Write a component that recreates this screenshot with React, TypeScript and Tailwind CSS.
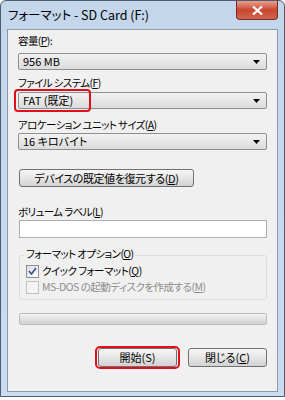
import React from "react";

const jp = { fontFamily: '"Noto Sans CJK JP", "Noto Sans", sans-serif' };

function Select({ value, highlight }: { value: string; highlight?: boolean }) {
  return (
    <div className="relative">
      <div className="flex h-[17px] items-center justify-between rounded-[2px] border border-[#8e8f8f] bg-gradient-to-b from-[#f2f2f2] to-[#dcdcdc] pl-[4px] pr-[6px] text-[11px] leading-[15px] text-black">
        <span>{value}</span>
        <svg width="7" height="4" viewBox="0 0 7 4"><path d="M0 0h7L3.5 4z" fill="#000" /></svg>
      </div>
      {highlight && (
        <div className="absolute left-[-4px] top-[-3px] h-[23px] w-[77px] rounded-[4px] border-2 border-[#e0101a]" />
      )}
    </div>
  );
}

function Button({ label, className = "" }: { label: React.ReactNode; className?: string }) {
  return (
    <div className={`flex items-center justify-center rounded-[3px] border border-[#707070] bg-gradient-to-b from-[#f6f6f6] via-[#e6e6e6] to-[#d2d2d2] text-[11px] leading-[15px] text-black ${className}`}>
      {label}
    </div>
  );
}

const lbl = "h-[14px] leading-[14px] text-[10.5px] tracking-[-0.6px]";

export default function App() {
  return (
    <div className="h-[400px] w-[285px] bg-white [font-feature-settings:'palt']" style={jp}>
      <div className="flex h-[397px] w-[285px] flex-col rounded-t-[6px] border border-[#4e5b6a] bg-gradient-to-b from-[#c3d6ec] to-[#c9dcf0]">
        <div className="flex h-[28px] items-start justify-between">
          <span className="pl-[7px] pt-[5px] text-[12.5px] leading-[18px] text-black">フォーマット - SD Card (F:)</span>
          <div className="mr-[6px] flex h-[19px] w-[42px] items-center justify-center rounded-b-[4px] border border-t-0 border-[#7a2a22] bg-gradient-to-b from-[#e5a093] via-[#c9452f] to-[#d0654f]">
            <svg width="11" height="9" viewBox="0 0 11 9">
              <path d="M1 0.5l9 8M10 0.5l-9 8" stroke="#fff" strokeWidth="2.2" />
            </svg>
          </div>
        </div>
        <div className="mx-[6px] mb-[4px] flex flex-1 flex-col border border-[#8b9aab] bg-[#f0f0f0] px-[10px] text-[11px] text-black">
          <div className={`mt-[4px] ${lbl}`}>容量(<u>P</u>):</div>
          <div className="mt-[5px]"><Select value="956 MB" /></div>
          <div className={`mt-[6px] ${lbl}`}>ファイル システム(<u>F</u>)</div>
          <div className="mt-[2px]"><Select value="FAT (既定)" highlight /></div>
          <div className={`mt-[9px] ${lbl}`}>アロケーション ユニット サイズ(<u>A</u>)</div>
          <div className="mt-[1px]"><Select value="16 キロバイト" /></div>
          <Button className="mt-[19px] ml-[1px] h-[18px] w-[175px] tracking-[-0.4px]" label={<span>デバイスの既定値を復元する(<u>D</u>)</span>} />
          <div className={`mt-[18px] ${lbl}`}>ボリューム ラベル(<u>L</u>)</div>
          <div className="mt-[1px] ml-[1px] h-[18px] border border-[#abadb3] bg-white" />
          <div className="relative mt-[17px] ml-[1px] h-[45px] rounded-[3px] border border-[#d5dfe5] px-[6px] pt-[7px]">
            <div className={`absolute left-[4px] top-[-9px] bg-[#f0f0f0] px-[2px] ${lbl}`}>フォーマット オプション(<u>O</u>)</div>
            <div className="flex h-[16px] items-center gap-[3px]">
              <div className="flex h-[13px] w-[13px] items-center justify-center border border-[#8f8f8f] bg-gradient-to-br from-[#dcdcdc] to-[#ffffff]">
                <svg width="9" height="8" viewBox="0 0 9 8"><path d="M1 4l2.5 3L8 1" stroke="#3250a0" strokeWidth="1.6" fill="none" /></svg>
              </div>
              <span className="text-[10.5px] tracking-[-0.5px]">クイック フォーマット(<u>Q</u>)</span>
            </div>
            <div className="flex h-[16px] items-center gap-[3px] text-[#8d8d8d]">
              <div className="h-[13px] w-[13px] border border-[#c2c2c2] bg-[#f4f4f4]" />
              <span className="text-[10.5px] tracking-[-0.5px]">MS-DOS の起動ディスクを作成する(<u>M</u>)</span>
            </div>
          </div>
          <div className="mt-[13px] ml-[1px] h-[12px] rounded-[2px] border border-[#bcbcbc] bg-gradient-to-b from-[#f3f3f3] via-[#e2e2e2] to-[#d0d0d0]" />
          <div className="mt-[23px] flex justify-end gap-[11px]">
            <div className="relative">
              <Button className="h-[19px] w-[79px] border-[#3c7fb1] from-[#eaf6fd] via-[#d9f0fc] to-[#bee6fd]" label="開始(S)" />
              <div className="absolute left-[-3px] top-[-2px] h-[23px] w-[85px] rounded-[5px] border-2 border-[#e0101a]" />
            </div>
            <Button className="h-[19px] w-[79px]" label={<span>閉じる(<u>C</u>)</span>} />
          </div>
        </div>
      </div>
    </div>
  );
}
